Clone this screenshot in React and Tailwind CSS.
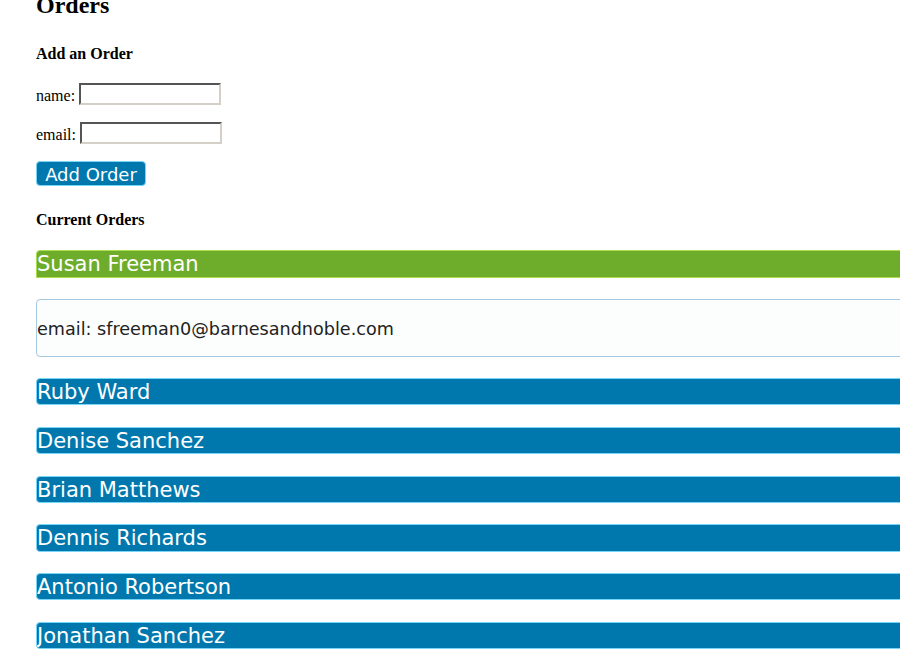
import { useState } from 'react'

const orders = [
  { name: 'Susan Freeman', email: 'sfreeman0@barnesandnoble.com' },
  { name: 'Ruby Ward', email: 'rward1@example.com' },
  { name: 'Denise Sanchez', email: 'dsanchez2@example.com' },
  { name: 'Brian Matthews', email: 'bmatthews3@example.com' },
  { name: 'Dennis Richards', email: 'drichards4@example.com' },
  { name: 'Antonio Robertson', email: 'arobertson5@example.com' },
  { name: 'Jonathan Sanchez', email: 'jsanchez6@example.com' },
]

const serif = { fontFamily: '"Liberation Serif", "Times New Roman", serif' }

export default function App() {
  const [open, setOpen] = useState(0)

  return (
    <div className="w-[900px] h-[649px] overflow-hidden bg-white text-black" style={serif}>
      <div className="w-[1200px] pl-[36px] -mt-[7.6px]">
        <h1 className="text-[24px] font-bold leading-[27px]">Orders</h1>

        <h3 className="mt-[25.2px] text-[16px] font-bold leading-[18px]">Add an Order</h3>

        <div className="mt-[20.4px] flex h-[22px] items-start">
          <span className="mt-[3.6px] text-[16px] leading-[18px]">name:</span>
          <input className="ml-[4px] h-[22px] w-[142px] border-2 border-t-[#555] border-l-[#555] border-r-[#d4d0c8] border-b-[#d4d0c8] bg-white outline-none" />
        </div>

        <div className="mt-[17px] flex h-[22px] items-start">
          <span className="mt-[3.6px] text-[16px] leading-[18px]">email:</span>
          <input className="ml-[4px] h-[22px] w-[142px] border-2 border-t-[#555] border-l-[#555] border-r-[#d4d0c8] border-b-[#d4d0c8] bg-white outline-none" />
        </div>

        <button
          className="mt-[17px] block h-[25px] w-[110px] rounded-[4px] border border-[#77d5f7] bg-[#0078ae] pt-[2px] text-center text-[18px] leading-[21px] text-white"
          style={{ fontFamily: '"DejaVu Sans", Verdana, sans-serif' }}
        >
          Add Order
        </button>

        <h3 className="mt-[24.6px] text-[16px] font-bold leading-[18px]">Current Orders</h3>

        <div className="mt-[21.4px]" style={{ fontFamily: '"DejaVu Sans", Verdana, sans-serif' }}>
          {orders.map((o, i) => (
            <div key={o.name} className={i === 0 ? '' : 'mt-[21.4px]'}>
              <div
                onClick={() => setOpen(i)}
                className={
                  i === open
                    ? 'h-[27.6px] cursor-pointer overflow-hidden rounded-t-[4px] border border-[#acdd4a] bg-[#6eac2c] text-[21px] leading-[26px] text-white'
                    : 'h-[27.3px] cursor-pointer overflow-hidden rounded-[4px] border border-[#77d5f7] bg-[#0078ae] text-[21px] leading-[26px] text-white'
                }
              >
                {o.name}
              </div>
              {i === open && (
                <div className="mt-[21.2px] h-[58px] rounded-[4px] border border-[#a6c9e2] bg-[#fcfdfd] pt-[1px] text-[17.6px] leading-[56px] text-[#222]">
                  email: {o.email}
                </div>
              )}
            </div>
          ))}
        </div>
      </div>
    </div>
  )
}
